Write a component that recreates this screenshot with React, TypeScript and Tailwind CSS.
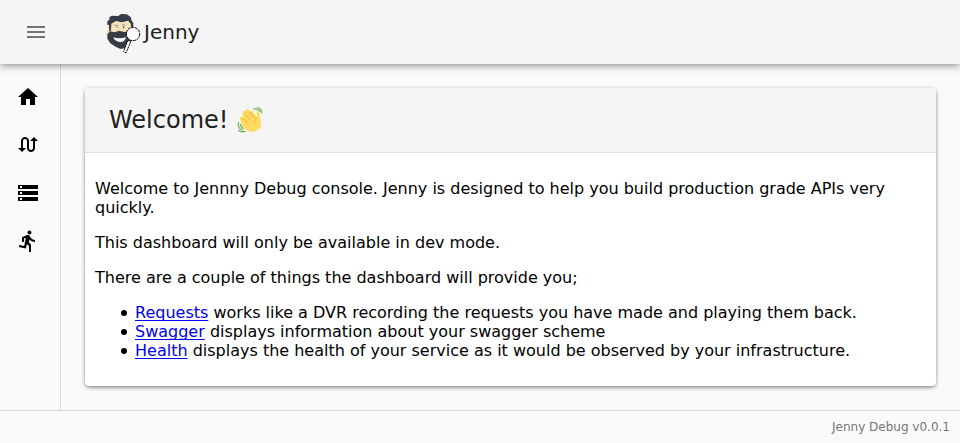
import React from "react";
import { MdDirectionsRun, MdHome, MdMenu, MdStorage, MdSwapCalls } from "react-icons/md";

const navItems = [
  { label: "Home", href: "#home", Icon: MdHome },
  { label: "Requests", href: "#requests", Icon: MdSwapCalls },
  { label: "Swagger", href: "#swagger", Icon: MdStorage },
  { label: "Health", href: "#health", Icon: MdDirectionsRun },
];

const features = [
  {
    name: "Requests",
    href: "#requests",
    text: "works like a DVR recording the requests you have made and playing them back.",
  },
  { name: "Swagger", href: "#swagger", text: "displays information about your swagger scheme" },
  {
    name: "Health",
    href: "#health",
    text: "displays the health of your service as it would be observed by your infrastructure.",
  },
];

function Logo() {
  return (
    <svg viewBox="0 0 132 144" className="h-12 w-11 shrink-0" aria-hidden="true">
      <path d="M22 45 L27 40 L94 42 L98 54 L96 76 L22 84 L18 78 L19 68 L22 67Z" fill="#f4e4bc" />
      <path
        d="M22 51 L22 39 L28 36 L28 28 L35 23 L54 24 L64 18 L80 19 L92 27 L95 38 L100 44 L100 56 L94 60 L92 47 L84 38 L66 43 L48 39 L34 47 L33 67 L28 72 L27 50Z"
        fill="#363d49"
      />
      <path
        d="M22 79 L30 70 L44 73 L57 68 L73 72 L90 71 L97 75 L96 96 L86 112 L76 120 L62 123 L48 117 L31 106 L22 92Z"
        fill="#363d49"
      />
      <path d="M40 88 Q60 94 78 87 Q76 102 61 102 Q44 101 40 88Z" fill="#fff" />
      <path d="M43 52h11M66 51h10" stroke="#776f64" strokeWidth="2" />
      <path d="M51 55v5" stroke="#aaa28e" strokeWidth="4" />
      <path d="M71 55v6" stroke="#363d49" strokeWidth="3" />
      <path d="M59 54l-3 14h7" fill="none" stroke="#e4d4ab" strokeWidth="2" />
      <path
        d="M83 98 L71 130 L74 134 L79 133 L93 99Z"
        fill="#fff"
        stroke="#000"
        strokeWidth="3"
        strokeDasharray="6 2"
      />
      <circle cx="99" cy="78" r="20" fill="#fff" stroke="#000" strokeWidth="3" strokeDasharray="9 2" />
    </svg>
  );
}

function WavingHand() {
  return (
    <svg viewBox="0 0 108 108" className="h-9 w-9 shrink-0" role="img" aria-label="Waving hand">
      <path
        d="M33 73 L24 53 Q21 46 26 44 Q30 42 34 48 L32 38 Q29 29 35 27 Q40 25 43 32 L42 29 Q39 22 45 21 Q49 20 53 27 L56 31 Q56 23 62 26 L76 48 L74 34 Q74 26 80 28 Q83 30 83 38 L87 63 Q88 78 75 85 Q58 94 45 85Q39 81 33 73Z"
        fill="#ffdc5d"
      />
      <path
        d="M33 49 L47 64 M39 35 L55 55 M51 28 L67 48 M75 48 Q65 53 69 66"
        fill="none"
        stroke="#ef9645"
        strokeWidth="2"
        strokeLinecap="round"
      />
      <path
        d="M66 21 Q76 19 83 28 M76 17 Q88 19 89 33 M20 63 Q16 78 31 84 M27 67 Q24 75 34 79 M20 85 Q27 92 39 88"
        fill="none"
        stroke="#77b255"
        strokeWidth="4"
        strokeLinecap="round"
      />
    </svg>
  );
}

export default function App() {
  return (
    <div className="flex min-h-screen flex-col bg-[#fafafa] font-['DejaVu_Sans',sans-serif] text-base leading-[19px] text-black">
      <header className="relative z-10 flex h-16 items-center bg-[#f5f5f5] px-4 shadow-[0_1px_8px_0_rgba(0,0,0,0.5)]">
        <button type="button" aria-label="Toggle menu" className="flex h-10 w-10 items-center justify-center text-[#757575]">
          <MdMenu size={24} />
        </button>
        <div className="ml-11 flex items-center">
          <Logo />
          <h1 className="text-xl text-[#212121]">Jenny</h1>
        </div>
      </header>
      <div className="flex flex-1">
        <nav aria-label="Main" className="w-[61px] shrink-0 border-r border-[#dadada] pt-[9px]">
          {navItems.map(({ label, href, Icon }) => (
            <a key={label} href={href} aria-label={label} className="flex h-12 items-center px-4">
              <Icon size={24} />
            </a>
          ))}
        </nav>
        <main className="min-w-0 flex-1 p-6">
          <section className="rounded-sm bg-white shadow-[0_2px_4px_-1px_rgba(0,0,0,0.4),0_1px_4px_0_rgba(0,0,0,0.22)]">
            <div className="flex h-[65px] items-center gap-1 rounded-t-sm border-b border-[#dedede] bg-[#f5f5f5] px-6 text-[#212121]">
              <h2 className="text-2xl">Welcome!</h2>
              <WavingHand />
            </div>
            <div className="flex flex-col gap-4 px-2.5 py-[26px]">
              <p>
                Welcome to Jennny Debug console. Jenny is designed to help you build production grade APIs very quickly.
              </p>
              <p>This dashboard will only be available in dev mode.</p>
              <p>There are a couple of things the dashboard will provide you;</p>
              <ul className="pl-10">
                {features.map(({ name, href, text }) => (
                  <li
                    key={name}
                    className="before:-ml-3.5 before:mr-2 before:mb-0.5 before:inline-block before:size-1.5 before:rounded-full before:bg-black before:align-middle before:content-['']"
                  >
                    <a href={href} className="text-[#0000ee] underline underline-offset-2 [text-decoration-skip-ink:none]">
                      {name}
                    </a>{" "}
                    {text}
                  </li>
                ))}
              </ul>
            </div>
          </section>
        </main>
      </div>
      <footer className="flex h-[33px] items-center justify-end border-t border-[#dadada] px-2.5 text-xs text-[#757575]">
        Jenny Debug v0.0.1
      </footer>
    </div>
  );
}
